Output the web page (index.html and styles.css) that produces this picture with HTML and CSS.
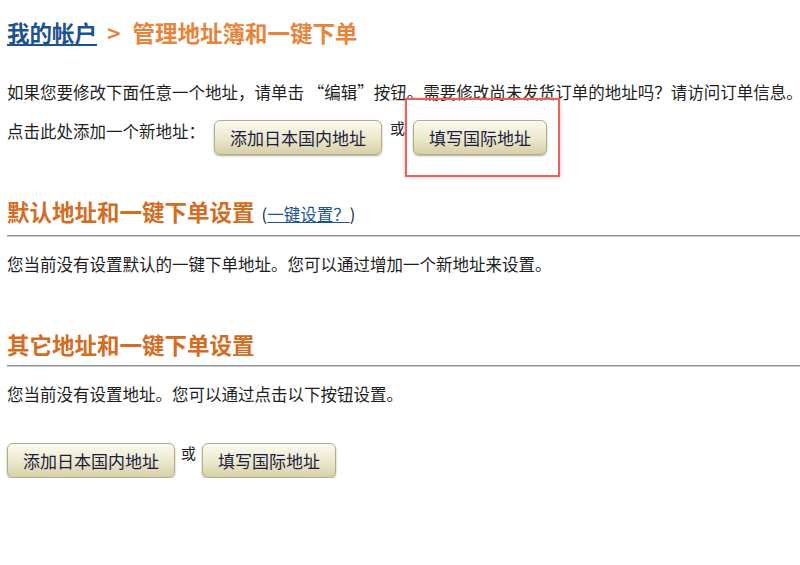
FILE: index.html
```html
<!DOCTYPE html>
<html lang="zh-CN">
<head>
    <meta charset="UTF-8">
    <meta name="viewport" content="width=device-width, initial-scale=1.0">
    <title>管理地址簿和一键下单</title>
    <link rel="stylesheet" href="styles.css">
</head>
<body>

<div class="container">
    <h1 class="page-title">
        <a href="#">我的帐户</a>
        <span class="sep">&gt;</span>
        管理地址簿和一键下单
    </h1>

    <p class="intro">如果您要修改下面任意一个地址，请单击 “编辑”按钮。需要修改尚未发货订单的地址吗？请访问订单信息。</p>

    <div class="add-row">
        <span class="add-label">点击此处添加一个新地址：</span>
        <button class="button">添加日本国内地址</button>
        <span class="or">或</span>
        <span class="highlight">
            <button class="button">填写国际地址</button>
        </span>
    </div>

    <h2 class="section-title">默认地址和一键下单设置 <span class="hint">(<a href="#">一键设置？</a>)</span></h2>
    <p class="note">您当前没有设置默认的一键下单地址。您可以通过增加一个新地址来设置。</p>

    <h2 class="section-title other">其它地址和一键下单设置</h2>
    <p class="note">您当前没有设置地址。您可以通过点击以下按钮设置。</p>

    <div class="button-row">
        <button class="button">添加日本国内地址</button>
        <span class="or">或</span>
        <button class="button">填写国际地址</button>
    </div>
</div>

</body>
</html>
```

FILE: styles.css
```css
body {
    margin: 0;
    font-family: "Noto Sans CJK SC", "Liberation Sans", sans-serif;
    font-size: 16.5px;
    color: #1e1e1e;
    background: #fff;
}
.container {
    padding: 19px 0 0 7px;
}
a {
    color: #1d5290;
}
.page-title {
    margin: 0;
    font-size: 22.5px;
    line-height: 26px;
    font-weight: bold;
    color: #e8833a;
}
.page-title a {
    color: #1d5290;
}
.page-title .sep {
    margin: 0 7px 0 5px;
}
.intro {
    margin: 37px 0 0;
    line-height: 20px;
    white-space: nowrap;
}
.add-row,
.button-row {
    display: flex;
    align-items: flex-start;
    gap: 8px;
}
.add-row {
    margin-top: 18px;
}
.add-label {
    line-height: 20px;
    margin-top: 1px;
    margin-right: 1px;
}
.or {
    line-height: 20px;
    margin-top: -2px;
    font-size: 15px;
}
.button {
    height: 35px;
    padding: 0 15px;
    font-family: inherit;
    font-size: 17px;
    color: #1c1c40;
    background: linear-gradient(#fbfaef, #ebe8cc 55%, #d5d0a6);
    border: 1px solid #b3ae86;
    border-radius: 6px;
    box-shadow: 0 1px 2px rgba(0, 0, 0, 0.35);
    cursor: pointer;
}
.highlight {
    position: relative;
    display: inline-block;
}
.highlight::before {
    content: "";
    position: absolute;
    top: -22px;
    bottom: -22px;
    left: -8px;
    right: -13px;
    border: 2px solid #e2655d;
    box-shadow: 0 0 3px rgba(226, 101, 93, 0.5);
    pointer-events: none;
}
.section-title {
    margin: 43px 0 0 0;
    padding-bottom: 8px;
    font-size: 22.5px;
    line-height: 26px;
    font-weight: bold;
    color: #d46c22;
    border-bottom: 1px solid #8c8c8c;
    box-shadow: 0 1px 0 #d0d0d0;
}
.section-title .hint {
    margin-left: 2px;
    font-size: 16.5px;
    font-weight: normal;
    color: #1e1e1e;
}
.section-title.other {
    margin-top: 57px;
}
.note {
    margin: 18px 0 0;
    line-height: 20px;
}
.button-row {
    margin-top: 39px;
    gap: 6px;
}
.button-row .or {
    margin-top: 0;
}
```
